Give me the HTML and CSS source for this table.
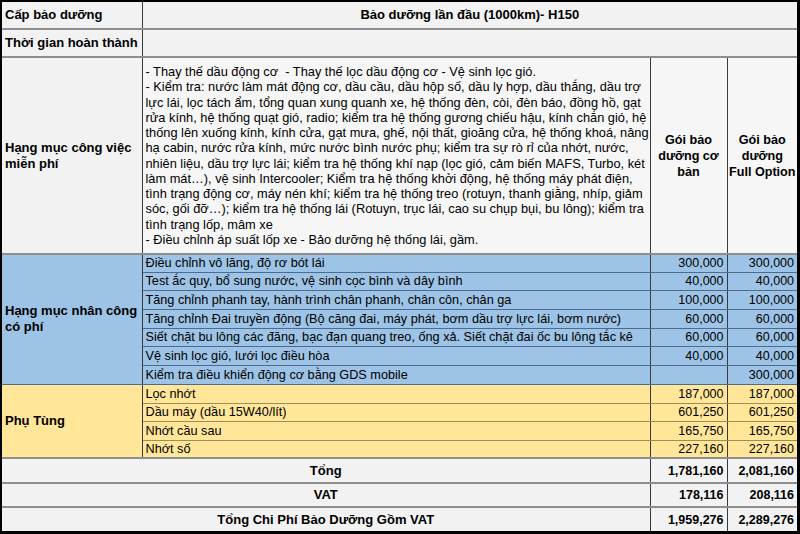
FILE: index.html
```html
<!DOCTYPE html>
<html lang="vi">
<head>
<meta charset="utf-8">
<title>Bảo dưỡng lần đầu (1000km)- H150</title>
<link rel="stylesheet" href="styles.css">
</head>
<body>
<div class="frame">
<table class="grid">
  <colgroup>
    <col class="c1"><col class="c2"><col class="c3"><col class="c4">
  </colgroup>
  <tbody>
    <tr class="h-r1 plain">
      <td class="lbl">Cấp bảo dưỡng</td>
      <td class="lbl center" colspan="3">Bảo dưỡng lần đầu (1000km)- H150</td>
    </tr>
    <tr class="h-r2 plain">
      <td class="lbl">Thời gian hoàn thành</td>
      <td colspan="3"></td>
    </tr>
    <tr class="h-r3 plain">
      <td class="lbl">Hạng mục công việc<br>miễn phí</td>
      <td class="desc">- Thay thế dầu động cơ &nbsp;- Thay thế lọc dầu động cơ - Vệ sinh lọc gió.<br>- Kiểm tra: nước làm mát động cơ, dầu cầu, dầu hộp số, dầu ly hợp, dầu thắng, dầu trợ<br>lực lái, lọc tách ẩm, tổng quan xung quanh xe, hệ thống đèn, còi, đèn báo, đồng hồ, gạt<br>rửa kính, hệ thống quạt gió, radio; kiểm tra hệ thống gương chiếu hậu, kính chắn gió, hệ<br>thống lên xuống kính, kính cửa, gạt mưa, ghế, nội thất, gioăng cửa, hệ thống khoá, nâng<br>hạ cabin, nước rửa kính, mức nước bình nước phụ; kiểm tra sự rò rỉ của nhớt, nước,<br>nhiên liệu, dầu trợ lực lái; kiểm tra hệ thống khí nạp (lọc gió, cảm biến MAFS, Turbo, két<br>làm mát…), vệ sinh Intercooler; Kiểm tra hệ thống khởi động, hệ thống máy phát điện,<br>tình trạng động cơ, máy nén khí; kiểm tra hệ thống treo (rotuyn, thanh giằng, nhíp, giảm<br>sóc, gối đỡ…); kiểm tra hệ thống lái (Rotuyn, trục lái, cao su chụp bụi, bu lông); kiểm tra<br>tình trạng lốp, mâm xe<br>- Điều chỉnh áp suất lốp xe - Bảo dưỡng hệ thống lái, gầm.</td>
      <td class="pkg">Gói bảo<br>dưỡng cơ<br>bản</td>
      <td class="pkg">Gói bảo<br>dưỡng<br>Full Option</td>
    </tr>
    <tr class="blue hb1">
      <td class="lbl" rowspan="7">Hạng mục nhân công<br>có phí</td>
      <td class="item">Điều chỉnh vô lăng, độ rơ bót lái</td>
      <td class="num">300,000</td><td class="num">300,000</td>
    </tr>
    <tr class="blue hb1">
      <td class="item">Test ắc quy, bổ sung nước, vệ sinh cọc bình và dây bình</td>
      <td class="num">40,000</td><td class="num">40,000</td>
    </tr>
    <tr class="blue hb2">
      <td class="item">Tăng chỉnh phanh tay, hành trình chân phanh, chân côn, chân ga</td>
      <td class="num">100,000</td><td class="num">100,000</td>
    </tr>
    <tr class="blue hb2">
      <td class="item">Tăng chỉnh Đai truyền động (Bộ căng đai, máy phát, bơm dầu trợ lực lái, bơm nước)</td>
      <td class="num">60,000</td><td class="num">60,000</td>
    </tr>
    <tr class="blue hb1">
      <td class="item">Siết chặt bu lông các đăng, bạc đạn quang treo, ống xả. Siết chặt đai ốc bu lông tắc kê</td>
      <td class="num">60,000</td><td class="num">60,000</td>
    </tr>
    <tr class="blue hb2">
      <td class="item">Vệ sinh lọc gió, lưới lọc điều hòa</td>
      <td class="num">40,000</td><td class="num">40,000</td>
    </tr>
    <tr class="blue hb2">
      <td class="item">Kiểm tra điều khiển động cơ bằng GDS mobile</td>
      <td class="num"></td><td class="num">300,000</td>
    </tr>
    <tr class="gold hb2">
      <td class="lbl" rowspan="4">Phụ Tùng</td>
      <td class="item">Lọc nhớt</td>
      <td class="num">187,000</td><td class="num">187,000</td>
    </tr>
    <tr class="gold hb1">
      <td class="item">Dầu máy (dầu 15W40/lít)</td>
      <td class="num">601,250</td><td class="num">601,250</td>
    </tr>
    <tr class="gold hb2">
      <td class="item">Nhớt cầu sau</td>
      <td class="num">165,750</td><td class="num">165,750</td>
    </tr>
    <tr class="gold hb1">
      <td class="item">Nhớt số</td>
      <td class="num">227,160</td><td class="num">227,160</td>
    </tr>
    <tr class="plain total ht1">
      <td class="lbl center" colspan="2">Tổng</td>
      <td class="num strong">1,781,160</td><td class="num strong">2,081,160</td>
    </tr>
    <tr class="plain total ht2">
      <td class="lbl center" colspan="2">VAT</td>
      <td class="num strong">178,116</td><td class="num strong">208,116</td>
    </tr>
    <tr class="plain total ht2">
      <td class="lbl center" colspan="2">Tổng Chi Phí Bảo Dưỡng Gồm VAT</td>
      <td class="num strong">1,959,276</td><td class="num strong">2,289,276</td>
    </tr>
  </tbody>
</table>
</div>
</body>
</html>
```

FILE: styles.css
```css
html, body {
  margin: 0;
  padding: 0;
  background: #ffffff;
}

.frame {
  width: 800px;
  height: 534px;
  box-sizing: border-box;
  border-style: solid;
  border-color: #000000;
  border-width: 2px 3px 3px 2px;
  background: #f2f2f2;
  overflow: hidden;
}

.grid {
  width: 795px;
  height: 529px;
  border-collapse: collapse;
  border-style: hidden;
  table-layout: fixed;
  font-family: "Liberation Sans", Arial, sans-serif;
  font-size: 12.5px;
  color: #000000;
}

.c1 { width: 140px; }
.c2 { width: 508px; }
.c3 { width: 77px; }
.c4 { width: 70px; }

.grid td {
  padding: 0 3px;
  vertical-align: middle;
  white-space: nowrap;
  overflow: hidden;
  border-left: 1px solid #3a3a3a;
  border-right: 1px solid #3a3a3a;
}

.plain td {
  background: #f2f2f2;
  border-top: 2px solid #8e8e8e;
  border-bottom: 2px solid #8e8e8e;
}

.h-r1 { height: 27px; }
.h-r2 { height: 28px; }
.h-r3 { height: 197px; }
.hb1 { height: 18px; }
.hb2 { height: 19px; }
.ht1 { height: 25px; }
.ht2 { height: 24px; }

.lbl {
  font-weight: bold;
  font-size: 13px;
  line-height: 16px;
}

.center { text-align: center; }

.desc {
  font-size: 12.8px;
  line-height: 15.25px;
  padding-top: 4px;
  padding-bottom: 4px;
}

.h-r3 td { background: #f6f6f6; }

.grid .pkg {
  text-align: center;
  font-weight: bold;
  font-size: 12.6px;
  line-height: 16px;
  padding: 0;
}

.h-r3 .lbl { background: #f2f2f2; }

.item {
  font-size: 12.7px;
}

.blue td {
  background: #9dc3e6;
  border-top: 1px solid #4e6b8c;
  border-bottom: 1px solid #4e6b8c;
  line-height: 16px;
}

.gold td {
  background: #ffe699;
  border-top: 1px solid #a08c55;
  border-bottom: 1px solid #a08c55;
  line-height: 16px;
}

.num {
  text-align: right;
}

.strong {
  font-weight: bold;
}
```
